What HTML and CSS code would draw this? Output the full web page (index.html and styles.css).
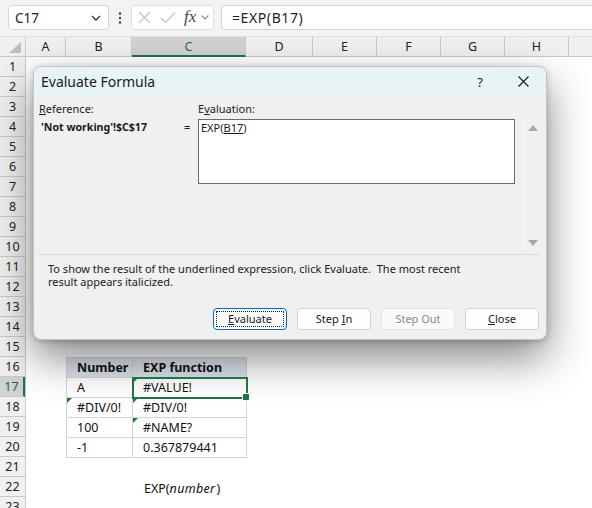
FILE: index.html
```html
<!DOCTYPE html>
<html>
<head>
<meta charset="utf-8">
<link rel="stylesheet" href="styles.css">
</head>
<body>
<div class="app">
  <div class="toolbar">
    <div class="namebox">
      <span class="nb-text">C17</span>
      <svg class="chev" width="10" height="6" viewBox="0 0 10 6"><path d="M1 1 L5 5 L9 1" fill="none" stroke="#333" stroke-width="1.3"/></svg>
    </div>
    <svg class="dots" width="4" height="14" viewBox="0 0 4 14"><circle cx="2" cy="2.5" r="1.2" fill="#444"/><circle cx="2" cy="7" r="1.2" fill="#444"/><circle cx="2" cy="11.5" r="1.2" fill="#444"/></svg>
    <div class="fxbox">
      <svg width="13" height="13" viewBox="0 0 13 13"><path d="M1 1 L12 12 M12 1 L1 12" stroke="#c4c4c4" stroke-width="1.2" fill="none"/></svg>
      <svg class="check" width="16" height="13" viewBox="0 0 16 13"><path d="M1 7 L5.5 11.5 L15 1.5" stroke="#c4c4c4" stroke-width="1.2" fill="none"/></svg>
      <span class="fx">fx</span>
      <svg class="chev2" width="8" height="5" viewBox="0 0 8 5"><path d="M0.5 0.5 L4 4 L7.5 0.5" fill="none" stroke="#888" stroke-width="1.1"/></svg>
    </div>
    <div class="formula">=EXP(B17)</div>
  </div>

  <div class="grid-area">
    <div class="rowhdr">
      <div class="corner"><svg width="12" height="11" viewBox="0 0 12 11"><path d="M12 0 L12 11 L0 11 Z" fill="#bdbdbd"/></svg></div>
      <div class="rn">1</div><div class="rn">2</div><div class="rn">3</div><div class="rn">4</div><div class="rn">5</div>
      <div class="rn">6</div><div class="rn">7</div><div class="rn">8</div><div class="rn">9</div><div class="rn">10</div>
      <div class="rn">11</div><div class="rn">12</div><div class="rn">13</div><div class="rn">14</div><div class="rn">15</div>
      <div class="rn">16</div><div class="rn rn-sel">17</div><div class="rn">18</div><div class="rn">19</div><div class="rn">20</div>
      <div class="rn">21</div><div class="rn">22</div><div class="rn">23</div>
    </div>
    <div class="main">
      <div class="colhdr">
        <div class="ch w-a">A</div>
        <div class="ch w-b">B</div>
        <div class="ch w-c ch-sel">C</div>
        <div class="ch w-d">D</div>
        <div class="ch w-e">E</div>
        <div class="ch w-f">F</div>
        <div class="ch w-g">G</div>
        <div class="ch w-h">H</div>
        <div class="ch w-i"></div>
      </div>
      <div class="cells">
        <div class="tbl">
          <div class="c th">Number</div>
          <div class="c th">EXP function</div>
          <div class="c">A</div>
          <div class="c sel err">#VALUE!<span class="handle"></span></div>
          <div class="c err">#DIV/0!</div>
          <div class="c err">#DIV/0!</div>
          <div class="c">100</div>
          <div class="c err">#NAME?</div>
          <div class="c">-1</div>
          <div class="c">0.367879441</div>
        </div>
        <div class="note">EXP(<i>number</i>&#8202;)</div>
      </div>
    </div>
  </div>

  <div class="dialog">
    <div class="dtitle">
      <span class="dt-text">Evaluate Formula</span>
      <span class="dt-help">?</span>
      <svg class="dt-close" width="11" height="11" viewBox="0 0 11 11"><path d="M0.5 0.5 L10.5 10.5 M10.5 0.5 L0.5 10.5" stroke="#1a1a1a" stroke-width="1.1" fill="none"/></svg>
    </div>
    <div class="dbody">
      <div class="dgrid">
        <div class="lbl"><u>R</u>eference:</div>
        <div></div>
        <div class="lbl">E<u>v</u>aluation:</div>
        <div></div>
        <div></div>
        <div class="refval">'Not working'!$C$17</div>
        <div class="eq">=</div>
        <div class="evalbox">EXP(<u class="hl">B17</u>)</div>
        <div></div>
        <div class="scroll">
          <svg width="10" height="6" viewBox="0 0 10 6"><path d="M5 0 L10 6 L0 6 Z" fill="#a8a8a8"/></svg>
          <svg width="10" height="6" viewBox="0 0 10 6"><path d="M0 0 L10 0 L5 6 Z" fill="#a8a8a8"/></svg>
        </div>
      </div>
      <div class="sep"></div>
      <p class="hint">To show the result of the underlined expression, click Evaluate.&nbsp; The most recent<br>result appears italicized.</p>
      <div class="buttons">
        <div class="btn btn-focus"><span class="focusring"><u>E</u>valuate</span></div>
        <div class="btn">Step <u>I</u>n</div>
        <div class="btn btn-dis">Step Out</div>
        <div class="btn"><u>C</u>lose</div>
      </div>
    </div>
  </div>
</div>
</body>
</html>
```

FILE: styles.css
```css
* { box-sizing: border-box; }
html, body { margin: 0; padding: 0; background: #ffffff; }
body { width: 592px; height: 508px; overflow: hidden; font-family: "Noto Sans", "Open Sans", sans-serif; color: #1a1a1a; }
.app { position: relative; width: 592px; height: 508px; overflow: hidden; }

/* toolbar */
.toolbar { height: 37px; background: #f3f3f3; display: flex; align-items: flex-start; padding-top: 5px; border-bottom: 1px solid #e2e2e2; }
.namebox { margin-left: 8px; width: 101px; height: 25px; background: #fff; border: 1px solid #d4d4d4; border-radius: 4px; display: flex; align-items: center; justify-content: space-between; padding: 0 7px 0 6px; }
.nb-text { font-size: 13.5px; color: #222; }
.dots { margin: 6px 0 0 9px; }
.fxbox { margin-left: 9px; width: 83px; height: 25px; background: #fff; border: 1px solid #dedede; border-radius: 4px; display: flex; align-items: center; padding-left: 6px; }
.fxbox .check { margin-left: 9px; }
.fx { font-family: "Liberation Serif", "DejaVu Serif", serif; font-style: italic; font-size: 17px; color: #444; margin-left: 8px; line-height: 1; margin-top: -2px; }
.chev2 { margin-left: 5px; }
.formula { margin-left: 7px; flex: 1; height: 25px; background: #fff; border: 1px solid #d4d4d4; border-right: none; border-radius: 4px 0 0 4px; font-size: 14px; letter-spacing: 0.6px; padding-left: 10px; line-height: 23px; color: #222; }

/* grid */
.grid-area { display: flex; }
.rowhdr { width: 26px; display: flex; flex-direction: column; border-right: 1px solid #c9c9c9; }
.corner { height: 20px; background: #f0f0f0; border-bottom: 1px solid #c9c9c9; display: flex; align-items: flex-end; justify-content: flex-end; padding: 0 4px 3px 0; }
.rn { height: 20px; background: #f0f0f0; border-bottom: 1px solid #c9c9c9; font-size: 12.5px; text-align: center; line-height: 20px; color: #222; }
.rn-sel { background: #d2d2d2; color: #1e6b3d; border-right: 2px solid #217346; }
.main { flex: 1; display: flex; flex-direction: column; }
.colhdr { display: flex; height: 20px; background: #f0f0f0; border-bottom: 1px solid #c9c9c9; }
.ch { height: 20px; border-right: 1px solid #c9c9c9; font-size: 12.5px; text-align: center; line-height: 20px; color: #222; }
.ch-sel { background: #d2d2d2; color: #1e6b3d; border-bottom: 2px solid #217346; }
.w-a { width: 40px; } .w-b { width: 66px; } .w-c { width: 114px; } .w-d { width: 67px; }
.w-e { width: 64px; } .w-f { width: 64px; } .w-g { width: 64px; } .w-h { width: 64px; } .w-i { flex: 1; border-right: none; }

.cells { padding: 300px 0 0 40px; }
.tbl { display: grid; grid-template-columns: 66px 114px; grid-auto-rows: 20px; width: 180px; border-left: 1px solid #d4d4d4; border-top: 1px solid #d4d4d4; }
.c { position: relative; border-right: 1px solid #d4d4d4; border-bottom: 1px solid #d4d4d4; font-size: 12.5px; line-height: 20px; padding-left: 10px; color: #111; }
.th { background: #dce3eb; font-weight: 700; }
.err::before { content: ""; position: absolute; left: 0; top: 0; border-top: 5px solid #1f7a37; border-right: 5px solid transparent; }
.sel { outline: 2px solid #217346; outline-offset: -1px; z-index: 1; }
.handle { position: absolute; right: -4px; bottom: -4px; width: 6px; height: 6px; background: #217346; border: 1px solid #fff; box-sizing: content-box; }
.note { margin: 20px 0 0 78px; font-size: 12.5px; line-height: 22px; color: #111; }
.note i { letter-spacing: 0.3px; }

/* dialog */
.dialog { position: absolute; left: 33px; top: 66px; width: 514px; height: 274px; border: 1px solid #c4c4c4; border-radius: 8px; overflow: hidden; background: #f0f0f0; box-shadow: 0 18px 44px rgba(0,0,0,0.48), 0 2px 6px rgba(0,0,0,0.2); }
.dtitle { height: 29px; background: #e8f3f5; display: flex; align-items: center; padding-left: 7px; }
.dt-text { font-size: 14px; color: #1a1a1a; flex: 1; }
.dt-help { font-size: 13px; margin-right: 35px; color: #1a1a1a; }
.dt-close { margin-right: 17px; }
.dbody { padding: 4px 6px 0 5px; }
.dgrid { display: grid; grid-template-columns: 145px 14px 317px 9px 16px; grid-template-rows: 18px 132px; row-gap: 1px; }
.lbl { font-size: 11px; line-height: 18px; color: #1a1a1a; }
.refval { font-size: 10.6px; font-weight: 700; line-height: 16px; padding-left: 2px; }
.eq { font-size: 11px; line-height: 16px; }
.evalbox { height: 65px; background: #fff; border: 1px solid #6a6a6a; font-size: 11px; line-height: 15px; padding-left: 2px; }
.hl { text-decoration: underline; }
.scroll { border-left: 1px solid #fafafa; display: flex; flex-direction: column; justify-content: space-between; align-items: center; padding: 6px 0 5px 1px; }
.sep { height: 1px; background: #dadada; margin-top: 3px; }
.hint { margin: 7px 0 0 9px; font-size: 11px; line-height: 13px; color: #1a1a1a; white-space: nowrap; }
.buttons { display: flex; justify-content: flex-end; gap: 10px; margin-top: 20px; padding-right: 1px; }
.btn { width: 74px; height: 22px; background: #fdfdfd; border: 1px solid #d0d0d0; border-radius: 4px; font-size: 11px; text-align: center; line-height: 20px; color: #1a1a1a; }
.btn-focus { border: 1px solid #0067c0; padding: 2px; }
.focusring { display: block; height: 16px; line-height: 14px; border: 1px dotted #222; }
.btn-dis { color: #8a8a8a; background: #fafafa; border-color: #e2e2e2; }
```
